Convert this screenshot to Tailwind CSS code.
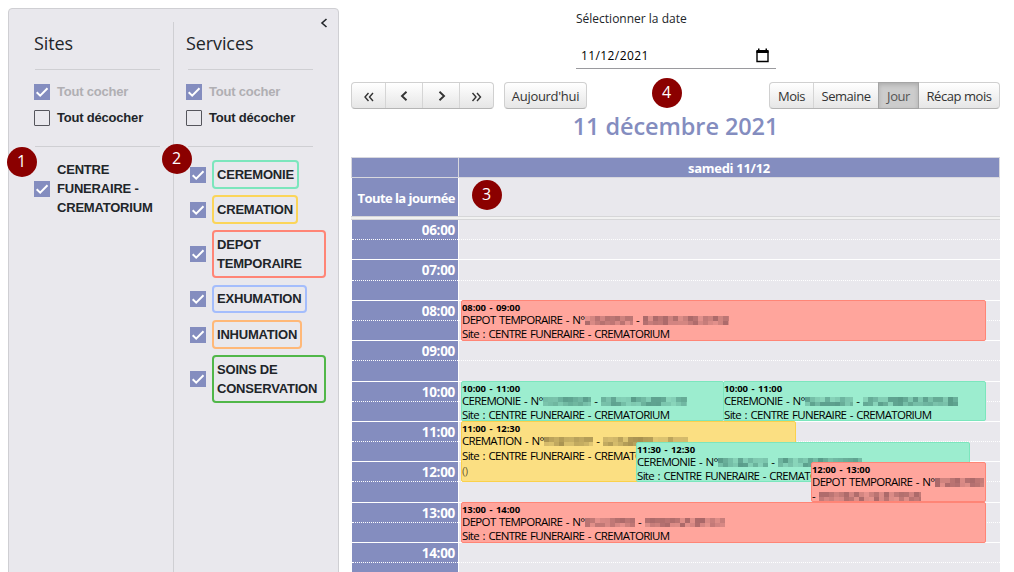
<!DOCTYPE html>
<html lang="fr">
<head>
  <meta charset="UTF-8" />
  <meta name="viewport" content="width=device-width, initial-scale=1.0"/>
  <title>Planning</title>
  <script src="https://cdn.jsdelivr.net/npm/@tailwindcss/browser@4"></script>
</head>

<body class="relative flex h-[572px] w-[1014px] overflow-hidden bg-white font-['Open_Sans',sans-serif] text-[#212529]">

  <!-- FILTERS -->
  <aside class="relative ml-2 mt-2 flex h-[580px] w-[331px] shrink-0 rounded border border-[#cfcfd3] bg-[#e9e8ed] font-['Liberation_Sans',sans-serif] text-[13px] font-bold leading-[19px] tracking-[-0.2px]">
    <svg class="absolute left-[311px] top-[9px]" width="8" height="10" viewBox="0 0 8 10" fill="none" stroke="#212529" stroke-width="1.6"><path d="M6.5 1 2 5l4.500 4"/></svg>

    <!-- Sites -->
    <section class="w-[164px] pl-[25px] pr-[13px] pt-[20px]">
      <h2 class="h-[40px] font-['Open_Sans',sans-serif] text-[18px] font-normal leading-[28px] tracking-[-0.1px]">Sites</h2>
      <div class="ml-px flex h-[78px] flex-col gap-[7px] border-y border-[#cfcfd3] pt-[12px]">
        <label class="-ml-px flex items-center gap-[7px] text-[#b0afb3]"><span class="check"></span>Tout cocher</label>
        <label class="-ml-px flex items-center gap-[7px]"><span class="size-4 rounded-[1px] border border-[#55555c]"></span>Tout décocher</label>
      </div>
      <div class="mt-[13px] flex items-center gap-[7px]">
        <span class="check"></span>
        <span class="whitespace-nowrap">CENTRE<br>FUNERAIRE -<br>CREMATORIUM</span>
      </div>
    </section>

    <!-- Services -->
    <section class="mt-[13px] w-[165px] border-l border-[#cfcfd3] pl-[12px] pt-[7px]">
      <h2 class="h-[40px] font-['Open_Sans',sans-serif] text-[18px] font-normal leading-[28px] tracking-[-0.1px]">Services</h2>
      <div class="ml-[2px] flex h-[78px] w-[125px] flex-col gap-[7px] border-y border-[#cfcfd3] pt-[12px]">
        <label class="-ml-[2px] flex items-center gap-[7px] text-[#b0afb3]"><span class="check"></span>Tout cocher</label>
        <label class="-ml-[2px] flex items-center gap-[7px]"><span class="size-4 rounded-[1px] border border-[#55555c]"></span>Tout décocher</label>
      </div>
      <div class="ml-[4px] mt-[13px] flex flex-col whitespace-nowrap">
        <div class="mb-[6px] flex h-[29px] items-center gap-[6px]"><span class="check"></span><span class="h-[29px] w-[87px] rounded border-2 border-[#7ce6bd] px-[3px] pt-[3px]">CEREMONIE</span></div>
        <div class="mb-[6px] flex h-[29px] items-center gap-[6px]"><span class="check"></span><span class="h-[29px] w-[86px] rounded border-2 border-[#fbd55a] px-[3px] pt-[3px]">CREMATION</span></div>
        <div class="mb-[7px] flex h-[48px] items-center gap-[6px]"><span class="check"></span><span class="h-[48px] w-[114px] rounded border-2 border-[#ff8576] px-[3px] pt-[3px]">DEPOT<br>TEMPORAIRE</span></div>
        <div class="mb-[7px] flex h-[28px] items-center gap-[6px]"><span class="check"></span><span class="h-[28px] w-[95px] rounded border-2 border-[#a4bdfc] px-[3px] pt-[2px]">EXHUMATION</span></div>
        <div class="mb-[6px] flex h-[29px] items-center gap-[6px]"><span class="check"></span><span class="h-[29px] w-[90px] rounded border-2 border-[#ffb878] px-[3px] pt-[3px]">INHUMATION</span></div>
        <div class="flex h-[48px] items-center gap-[6px]"><span class="check"></span><span class="h-[48px] w-[114px] rounded border-2 border-[#51b749] px-[3px] pt-[3px]">SOINS DE<br>CONSERVATION</span></div>
      </div>
    </section>
  </aside>

  <!-- CALENDAR -->
  <main class="ml-[12px] w-[649px] shrink-0">
    <div class="ml-[225px] h-[82px] w-[200px] pt-[9px]">
      <p class="text-[12px] leading-[19px]">Sélectionner la date</p>
      <div class="mt-[15px] flex h-[26px] items-center justify-between border-b border-[#9a9a9e] pl-[5px] pr-[7px] text-[12px] text-black">
        <span class="tracking-[0.4px]">11/12/2021</span>
        <svg width="13" height="15" viewBox="0 0 13 15"><path d="M1 3.500h11V13.500H1z" fill="none" stroke="#000" stroke-width="1.400"/><path d="M.5 2h12v3H.5zM2 .5h1.500V2H2zM9.500.5H11V2H9.500z"/></svg>
      </div>
    </div>

    <!-- Toolbar -->
    <div class="flex h-[27px] text-[13px] leading-[27px] text-[#333]">
      <div class="flex w-[143px] rounded border border-[#d0d0d0] border-b-[#b5b5b5] bg-linear-to-b from-white to-[#e6e6e6]">
        <button class="flex w-[34px] items-center justify-center border-r border-[#d5d5d5]"><svg class="mt-[3px]" width="12" height="10" viewBox="0 0 12 10" fill="none" stroke="#333" stroke-width="1.400"><path d="M5.500 1 2 5l3.500 4M10 1 6.500 5 10 9"/></svg></button>
        <button class="flex w-[37px] items-center justify-center border-r border-[#d5d5d5]"><svg class="mt-px" width="8" height="10" viewBox="0 0 8 10" fill="none" stroke="#333" stroke-width="1.900"><path d="M6.500 .8 2 5l4.500 4.200"/></svg></button>
        <button class="flex w-[37px] items-center justify-center border-r border-[#d5d5d5]"><svg class="ml-[2px] mt-px" width="8" height="10" viewBox="0 0 8 10" fill="none" stroke="#333" stroke-width="1.900"><path d="M1.500 .8 6 5 1.500 9.200"/></svg></button>
        <button class="flex flex-1 items-center justify-center"><svg class="mt-[3px]" width="12" height="10" viewBox="0 0 12 10" fill="none" stroke="#333" stroke-width="1.400"><path d="M1.500 1 5 5 1.500 9M6 1l3.500 4L6 9"/></svg></button>
      </div>
      <button class="ml-[10px] w-[83px] rounded border border-[#d0d0d0] border-b-[#b5b5b5] bg-linear-to-b from-white to-[#e6e6e6] tracking-[-0.3px]">Aujourd'hui</button>
      <div class="ml-auto flex w-[231px] rounded border border-[#d0d0d0] border-b-[#b5b5b5] bg-linear-to-b from-white to-[#e6e6e6] tracking-[-0.45px]">
        <button class="w-[44px] border-r border-[#d5d5d5]">Mois</button>
        <button class="w-[64px]">Semaine</button>
        <button class="-my-px w-[41px] border border-[#a5a5a5] bg-[#ccc] text-[#555] shadow-[inset_0_2px_4px_rgba(0,0,0,0.15)]">Jour</button>
        <button class="flex-1">Récap mois</button>
      </div>
    </div>
    <h1 class="h-[48px] text-center text-[23.500px] font-semibold leading-[34px] tracking-[-0.08px] text-[#848dbf]">11 décembre 2021</h1>

    <!-- Day header -->
    <div class="flex h-[21px] border border-[#d8d8de] bg-[#848dbf] text-[13px] font-bold leading-[20px] text-white">
      <div class="w-[107px] border-r border-[#d8d8de]"></div>
      <div class="flex-1 text-center tracking-[-0.3px]">samedi 11/12</div>
    </div>
    <div class="flex h-[38px] border-l border-white bg-[#e9e8ed]">
      <div class="w-[107px] border-r border-white bg-[#848dbf] pr-[3px] text-right text-[13px] font-bold leading-[40px] tracking-[-0.55px] whitespace-nowrap text-white">Toute la journée</div>
    </div>
    <div class="h-[4px] border-y border-[#d6d6d8] bg-[#f1f1f1]"></div>

    <!-- Slots -->
    <div class="relative ml-px h-[360px] w-[648px] bg-[#e9e8ed]">
      <div id="slots"></div>
      <div id="events"></div>
    </div>
  </main>

  <!-- NUMBERED MARKERS -->
  <div class="text-[16px] leading-[29px] text-white">
    <span class="absolute left-[6.500px] top-[146.500px] size-[30px] rounded-full bg-[#8b0000] text-center">1</span>
    <span class="absolute left-[161.500px] top-[143.500px] size-[30px] rounded-full bg-[#8b0000] text-center">2</span>
    <span class="absolute left-[471.500px] top-[179.500px] size-[30px] rounded-full bg-[#8b0000] text-center">3</span>
    <span class="absolute left-[651.500px] top-[77.500px] size-[30px] rounded-full bg-[#8b0000] text-center">4</span>
  </div>

  <script>
    // Checked boxes
    document.querySelectorAll(".check").forEach(el => {
      el.className = "size-4 shrink-0 bg-[#848dbf]";
      el.innerHTML = `<svg width="16" height="16" viewBox="0 0 16 16" fill="none" stroke="#fff" stroke-width="2"><path d="M2.700 8.200 6.200 11.700 13.500 4.300"/></svg>`;
    });

    // Hour rows: label, height of the first and the second half hour
    const hours = [
      ["06:00", 20, 20], ["07:00", 21, 20], ["08:00", 20, 20], ["09:00", 20, 21], ["10:00", 20, 20],
      ["11:00", 20, 20], ["12:00", 20, 21], ["13:00", 20, 20], ["14:00", 20, 20]
    ];
    document.getElementById("slots").innerHTML = hours.map(([label, a, b]) => `
      <div class="flex border-white" style="height:${a}px">
        <div class="w-[107px] border-r border-white bg-[#848dbf]"><div class="h-full border-b border-dotted border-white pr-[3px] text-right text-[13.500px] font-bold leading-[21px] tracking-[-0.3px] text-white">${label}</div></div>
        <div class="flex-1 border-b border-dotted border-white"></div>
      </div>
      <div class="flex border-b border-white" style="height:${b}px"><div class="w-[107px] border-r border-white bg-[#848dbf]"></div></div>`).join("");

    const colors = {
      red: "border-[#ff8576] bg-[#ffa59c]",
      green: "border-[#7ce6bd] bg-[#9cedcf]",
      yellow: "border-[#fbd14b] bg-[#fbdf82]"
    };
    const inks = { red: "#4a2530", green: "#12443f", yellow: "#4a3a1a" };

    // Hidden personal data, drawn as a mosaic
    let seed = 7;
    const rand = () => (seed = (seed * 16807) % 2147483647) / 2147483647;
    function mosaic(w, ink) {
      let cells = "";
      for (let x = 0; x < w; x += 5)
        for (let y = 0; y < 10; y += 5)
          cells += `<rect x="${x}" y="${y}" width="${Math.min(5, w - x)}" height="5" fill="${ink}" fill-opacity="${(0.14 + rand() * 0.34).toFixed(2)}"/>`;
      return `<svg class="inline-block align-[-1px]" width="${w}" height="9" shape-rendering="crispEdges">${cells}</svg>`;
    }

    // x, y, width, height inside the slots area
    const events = [
      { x: 109, y: 80, w: 525, h: 41, c: "red", t: "08:00 - 09:00", n: "DEPOT TEMPORAIRE", m: [48, 86] },
      { x: 109, y: 161, w: 263, h: 40, c: "green", t: "10:00 - 11:00", n: "CEREMONIE", m: [48, 86] },
      { x: 371, y: 161, w: 263, h: 40, c: "green", t: "10:00 - 11:00", n: "CEREMONIE", m: [48, 95] },
      { x: 109, y: 201, w: 335, h: 61, c: "yellow", t: "11:00 - 12:30", n: "CREMATION", m: [49, 85], more: "()" },
      { x: 284, y: 222, w: 334, h: 40, c: "green", t: "11:30 - 12:30", n: "CEREMONIE", m: [50, 84] },
      { x: 459, y: 242, w: 175, h: 40, c: "red", t: "12:00 - 13:00", n: "DEPOT TEMPORAIRE", m: [49, 102], wrap: true },
      { x: 109, y: 282, w: 525, h: 41, c: "red", t: "13:00 - 14:00", n: "DEPOT TEMPORAIRE", m: [50, 80] }
    ];
    document.getElementById("events").innerHTML = events.map(e => `
      <div class="absolute overflow-hidden rounded-[2px] border text-[11.500px] leading-[14px] tracking-[-0.68px] [word-spacing:1.2px] whitespace-nowrap text-black ${colors[e.c]}" style="left:${e.x}px;top:${e.y}px;width:${e.w}px;height:${e.h}px">
        <div class="h-[12px] text-[9.500px] font-bold leading-[13px] tracking-[-0.1px]">${e.t}</div>
        <div class="${e.more ? "h-[15px]" : "h-[14px]"}">${e.n} - N°${mosaic(e.m[0], inks[e.c])}${e.wrap ? "" : " - " + mosaic(e.m[1], inks[e.c])}</div>
        <div>${e.wrap ? "- " + mosaic(e.m[1], inks[e.c]) : "Site : CENTRE FUNERAIRE - CREMATORIUM"}</div>
        ${e.more ? `<div class="pt-px text-black/60">${e.more}</div>` : ""}
      </div>`).join("");
  </script>
</body>
</html>
